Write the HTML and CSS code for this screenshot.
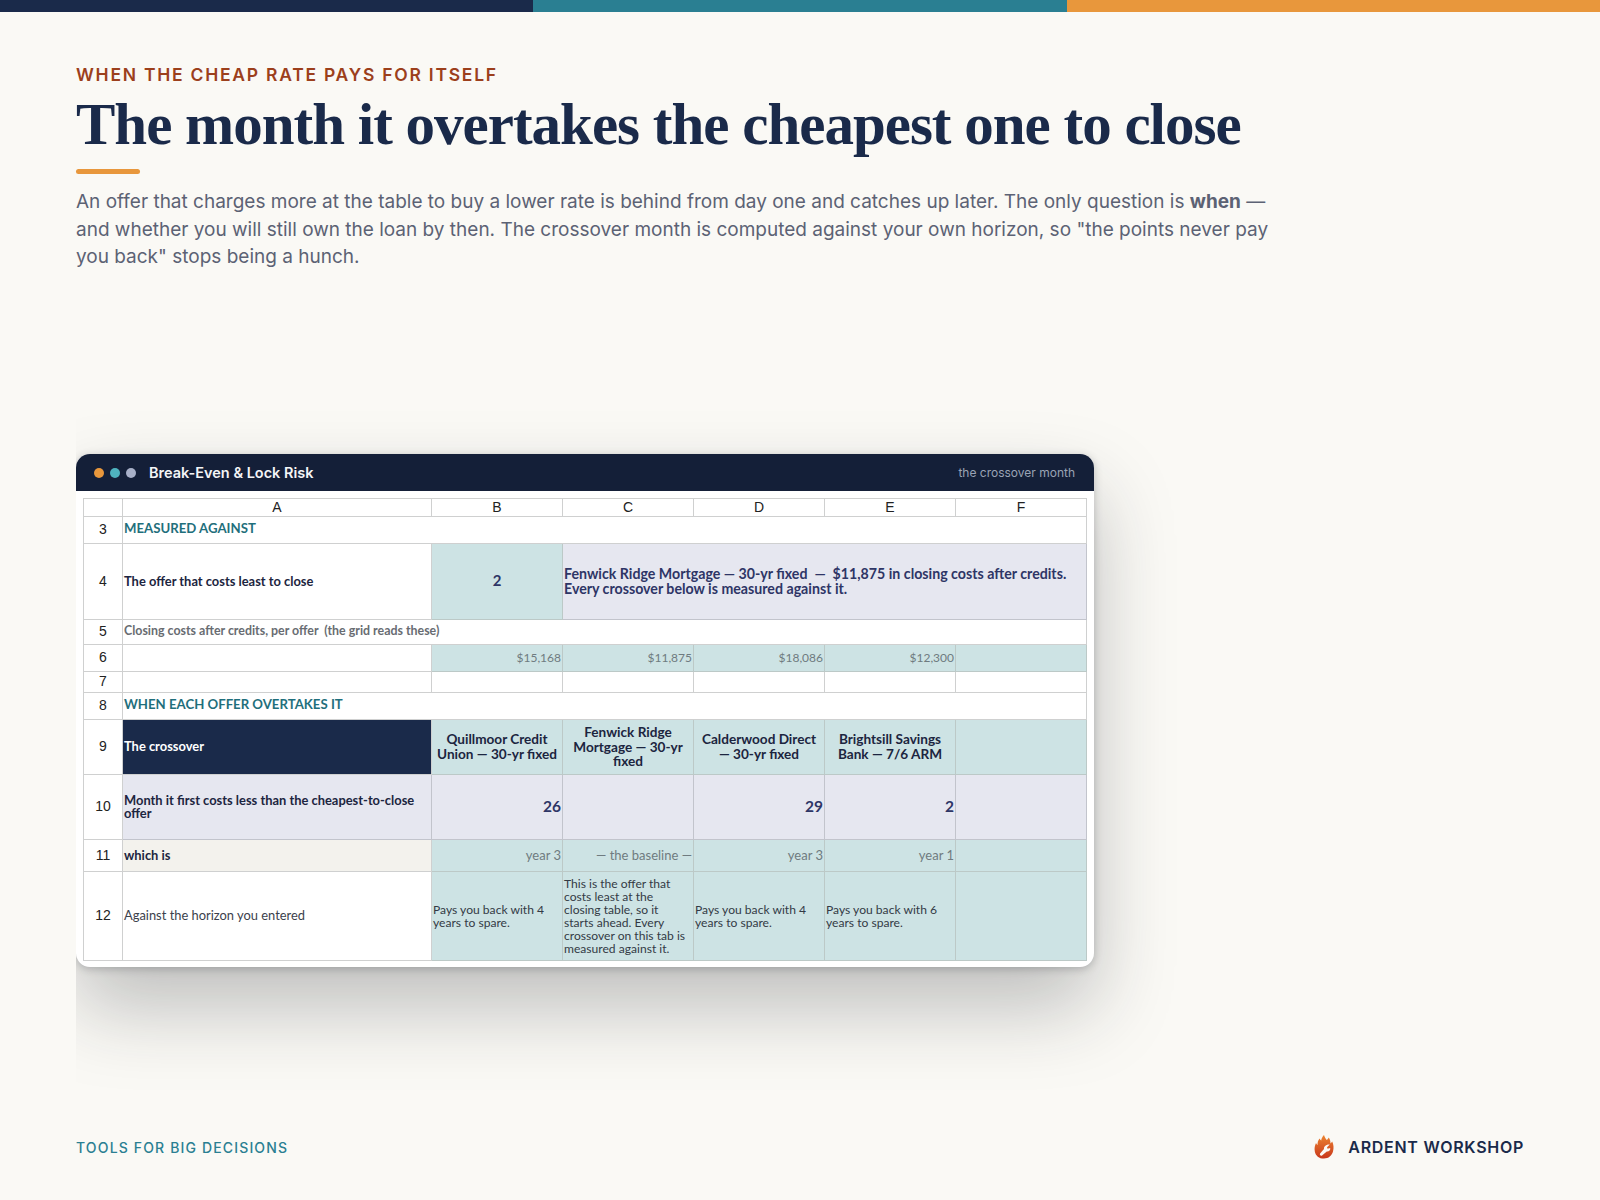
FILE: index.html
```html
<!DOCTYPE html>
<html lang="en">
<head>
    <meta charset="UTF-8">
    <meta name="viewport" content="width=device-width, initial-scale=1.0">
    <title>The month it overtakes the cheapest one to close</title>
    <link rel="stylesheet" href="styles.css">
</head>
<body>
    <div class="top-bar">
        <div class="seg-navy"></div>
        <div class="seg-teal"></div>
        <div class="seg-orange"></div>
    </div>

    <div class="intro">
        <div class="eyebrow">WHEN THE CHEAP RATE PAYS FOR ITSELF</div>
        <h1>The month it overtakes the cheapest one to close</h1>
        <div class="rule"></div>
        <p class="lead">An offer that charges more at the table to buy a lower rate is behind from day one and catches up later. The only question is <strong>when</strong> — and whether you will still own the loan by then. The crossover month is computed against your own horizon, so "the points never pay you back" stops being a hunch.</p>
    </div>

    <div class="shot-clip">
        <div class="window">
            <div class="window-head">
                <span class="dot dot-orange"></span>
                <span class="dot dot-teal"></span>
                <span class="dot dot-grey"></span>
                <span class="window-title">Break-Even &amp; Lock Risk</span>
                <span class="window-note">the crossover month</span>
            </div>
            <table class="sheet">
                <colgroup>
                    <col class="col-num">
                    <col class="col-a">
                    <col class="col-n">
                    <col class="col-n">
                    <col class="col-n">
                    <col class="col-n">
                    <col class="col-n">
                </colgroup>
                <tr class="row-cols">
                    <th></th><th>A</th><th>B</th><th>C</th><th>D</th><th>E</th><th>F</th>
                </tr>
                <tr class="row-3">
                    <th>3</th>
                    <td colspan="6" class="section">MEASURED AGAINST</td>
                </tr>
                <tr class="row-4">
                    <th>4</th>
                    <td class="label">The offer that costs least to close</td>
                    <td class="teal pick">2</td>
                    <td colspan="4" class="lav note">Fenwick Ridge Mortgage — 30-yr fixed &nbsp;—&nbsp; $11,875 in closing costs after credits.<br>Every crossover below is measured against it.</td>
                </tr>
                <tr class="row-5">
                    <th>5</th>
                    <td colspan="6" class="muted-label">Closing costs after credits, per offer &nbsp;(the grid reads these)</td>
                </tr>
                <tr class="row-6">
                    <th>6</th>
                    <td></td>
                    <td class="teal money">$15,168</td>
                    <td class="teal money">$11,875</td>
                    <td class="teal money">$18,086</td>
                    <td class="teal money">$12,300</td>
                    <td class="teal"></td>
                </tr>
                <tr class="row-7">
                    <th>7</th>
                    <td></td><td></td><td></td><td></td><td></td><td></td>
                </tr>
                <tr class="row-8">
                    <th>8</th>
                    <td colspan="6" class="section">WHEN EACH OFFER OVERTAKES IT</td>
                </tr>
                <tr class="row-9">
                    <th>9</th>
                    <td class="dark">The crossover</td>
                    <td class="teal offer">Quillmoor Credit Union — 30-yr fixed</td>
                    <td class="teal offer">Fenwick Ridge Mortgage — 30-yr fixed</td>
                    <td class="teal offer">Calderwood Direct — 30-yr fixed</td>
                    <td class="teal offer">Brightsill Savings Bank — 7/6 ARM</td>
                    <td class="teal"></td>
                </tr>
                <tr class="row-10">
                    <th>10</th>
                    <td class="lav label">Month it first costs less than the cheapest-to-close offer</td>
                    <td class="lav month">26</td>
                    <td class="lav"></td>
                    <td class="lav month">29</td>
                    <td class="lav month">2</td>
                    <td class="lav"></td>
                </tr>
                <tr class="row-11">
                    <th>11</th>
                    <td class="sand label">which is</td>
                    <td class="teal num">year 3</td>
                    <td class="teal num">— the baseline —</td>
                    <td class="teal num">year 3</td>
                    <td class="teal num">year 1</td>
                    <td class="teal"></td>
                </tr>
                <tr class="row-12">
                    <th>12</th>
                    <td class="plain">Against the horizon you entered</td>
                    <td class="teal body">Pays you back with 4 years to spare.</td>
                    <td class="teal body">This is the offer that costs least at the closing table, so it starts ahead. Every crossover on this tab is measured against it.</td>
                    <td class="teal body">Pays you back with 4 years to spare.</td>
                    <td class="teal body">Pays you back with 6 years to spare.</td>
                    <td class="teal"></td>
                </tr>
            </table>
        </div>
    </div>

    <div class="footer">
        <span class="tagline">TOOLS FOR BIG DECISIONS</span>
        <span class="brand">
            <svg class="brand-mark" width="20" height="24" viewBox="0 0 20 24">
                <defs>
                    <linearGradient id="flame" x1="0" y1="0" x2="0" y2="1">
                        <stop offset="0" stop-color="#ec8430"/>
                        <stop offset="1" stop-color="#c8381c"/>
                    </linearGradient>
                </defs>
                <path fill="url(#flame)" d="M10 0C10.6 2.4 11.6 3.6 12.8 5C13.6 4.4 14.4 3.4 14.6 2.6C16 4.4 16.6 6.2 16.4 8.4C17.2 8 17.8 7.4 18.2 6.6C19.6 9.6 20 13 19 16.6C17.8 20.8 14.6 23.6 10 23.6C5 23.6 1.6 20.6 0.8 16.4C0.2 13.2 0.8 10.6 2 8C2.4 9 3 9.6 3.6 10C3.4 7.6 4 5.6 5.6 3.6C6 4.6 6.6 5.2 7.2 5.6C7.4 3.6 8.4 1.6 10 0Z"/>
                <path fill="#fbfaf6" d="M15.8 9.6L13 12.2L13.6 13.8L16.2 12.9C16.6 15 15 16.8 12.8 16.5L8 20.6C6.9 21.4 5.2 19.8 6.1 18.6L10 14C9.6 11.6 12.6 9 15.8 9.6Z"/>
            </svg>
            ARDENT WORKSHOP
        </span>
    </div>
</body>
</html>
```

FILE: styles.css
```css
* {
    box-sizing: border-box;
}
html, body {
    margin: 0;
    height: 1200px;
}
body {
    display: flex;
    flex-direction: column;
    overflow: hidden;
    background: #faf9f5;
    font-family: Inter, "Liberation Sans", sans-serif;
}
.top-bar {
    display: flex;
    flex: none;
    height: 12px;
}
.top-bar div {
    flex: 1;
}
.seg-navy {
    background: #1a2a4a;
}
.seg-teal {
    background: #2a7f92;
}
.seg-orange {
    background: #e8973c;
}
.intro {
    padding: 53px 0 0 76px;
    height: 382px;
    flex: none;
}
.eyebrow {
    font-size: 17.5px;
    line-height: 20px;
    font-weight: 600;
    letter-spacing: 1.75px;
    color: #9c3f1c;
}
h1 {
    margin: 6px 0 0;
    font-family: "Liberation Serif", serif;
    font-size: 59px;
    line-height: 66px;
    font-weight: 700;
    letter-spacing: -1px;
    color: #1a2a4a;
    white-space: nowrap;
}
.rule {
    width: 64px;
    height: 5px;
    margin-top: 12px;
    border-radius: 3px;
    background: #e8973c;
}
.lead {
    width: 1210px;
    margin: 14px 0 0;
    font-size: 19px;
    line-height: 27.5px;
    color: #5c6274;
}
.lead strong {
    font-weight: 700;
}
/* the window shadow is cut off on the left, so it sits in a clipped box */
.shot-clip {
    flex: none;
    margin-left: 76px;
    padding: 60px 180px 168px 0;
    overflow: hidden;
    align-self: flex-start;
}
.window {
    width: 1018px;
    height: 513px;
    border-radius: 14px;
    background: #fff;
    box-shadow: 0 40px 80px rgba(30, 34, 40, 0.27), 0 2px 8px rgba(30, 34, 40, 0.24);
}
.window-head {
    display: flex;
    align-items: center;
    height: 37px;
    padding: 0 19px 0 18px;
    border-radius: 14px 14px 0 0;
    background: #141f38;
}
.dot {
    width: 10px;
    height: 10px;
    margin-right: 6px;
    border-radius: 50%;
}
.dot-orange {
    background: #e8973c;
}
.dot-teal {
    background: #4fb3bf;
}
.dot-grey {
    background: #a8b0c8;
}
.window-title {
    margin-left: 7px;
    font-size: 14.5px;
    font-weight: 600;
    color: #f4f5f7;
}
.window-note {
    margin-left: auto;
    font-size: 12px;
    color: #9aa3b5;
}
.sheet {
    width: 1004px;
    margin: 7px 0 0 7px;
    table-layout: fixed;
    border-collapse: collapse;
    font-family: Lato, sans-serif;
    font-size: 12.9px;
    line-height: 13.1px;
    color: #333a44;
}
.sheet th, .sheet td {
    padding: 0 1px;
    border: 1px solid #cfd0d0;
    overflow: hidden;
}
.sheet th {
    font-family: "Liberation Sans", sans-serif;
    font-size: 14px;
    font-weight: 400;
    text-align: center;
    color: #222;
    background: #fff;
}
.col-num {
    width: 39px;
}
.col-a {
    width: 309px;
}
.col-n {
    width: 131px;
}
.row-cols {
    height: 18px;
}
.row-3 {
    height: 27px;
}
.row-4 {
    height: 76px;
}
.row-5 {
    height: 25px;
}
.row-6 {
    height: 27px;
}
.row-7 {
    height: 21px;
}
.row-8 {
    height: 27px;
}
.row-9 {
    height: 55px;
}
.row-10 {
    height: 65px;
}
.row-11 {
    height: 32px;
}
.row-12 {
    height: 89px;
}
.section {
    font-size: 13.2px;
    font-weight: 700;
    color: #1f6f7c;
    padding-bottom: 2px !important;
}
.label {
    font-weight: 700;
    color: #1c2540;
}
.muted-label {
    font-size: 12.4px;
    font-weight: 700;
    color: #686c72;
    padding-bottom: 3px !important;
}
.teal {
    background: #cde3e4;
    border-color: #bcc9c7 !important;
}
.lav {
    background: #e6e7f0;
    border-color: #c2c4cc !important;
}
.sand {
    background: #f3f2ed;
}
.dark {
    background: #1a2a4a;
    color: #fff;
    font-weight: 700;
}
.plain {
    color: #3b414c;
}
.pick {
    text-align: center;
    font-size: 15px;
    font-weight: 700;
    color: #2e3566;
    padding-bottom: 2px !important;
}
.note {
    font-size: 14.2px;
    line-height: 15px;
    font-weight: 700;
    color: #2e3566;
    padding-bottom: 2px !important;
}
.money {
    text-align: right;
    font-size: 12px;
    color: #6f7b80;
}
.num {
    text-align: right;
    font-size: 13px;
    color: #6f7b80;
}
.offer {
    text-align: center;
    font-size: 13.6px;
    line-height: 14.7px;
    font-weight: 700;
    color: #1c2540;
}
.month {
    text-align: right;
    font-size: 15.5px;
    font-weight: 700;
    color: #2e3566;
}
.body {
    padding-right: 4px !important;
    font-size: 12.1px;
    color: #333a44;
}
.footer {
    display: flex;
    flex: none;
    align-items: center;
    justify-content: space-between;
    height: 24px;
    padding: 0 76px 0 76px;
}
.tagline {
    font-size: 14px;
    font-weight: 500;
    letter-spacing: 1.15px;
    color: #2a7f92;
}
.brand {
    display: flex;
    align-items: center;
    gap: 14px;
    font-size: 16px;
    font-weight: 600;
    letter-spacing: 0.72px;
    color: #1a2a4a;
}
```
